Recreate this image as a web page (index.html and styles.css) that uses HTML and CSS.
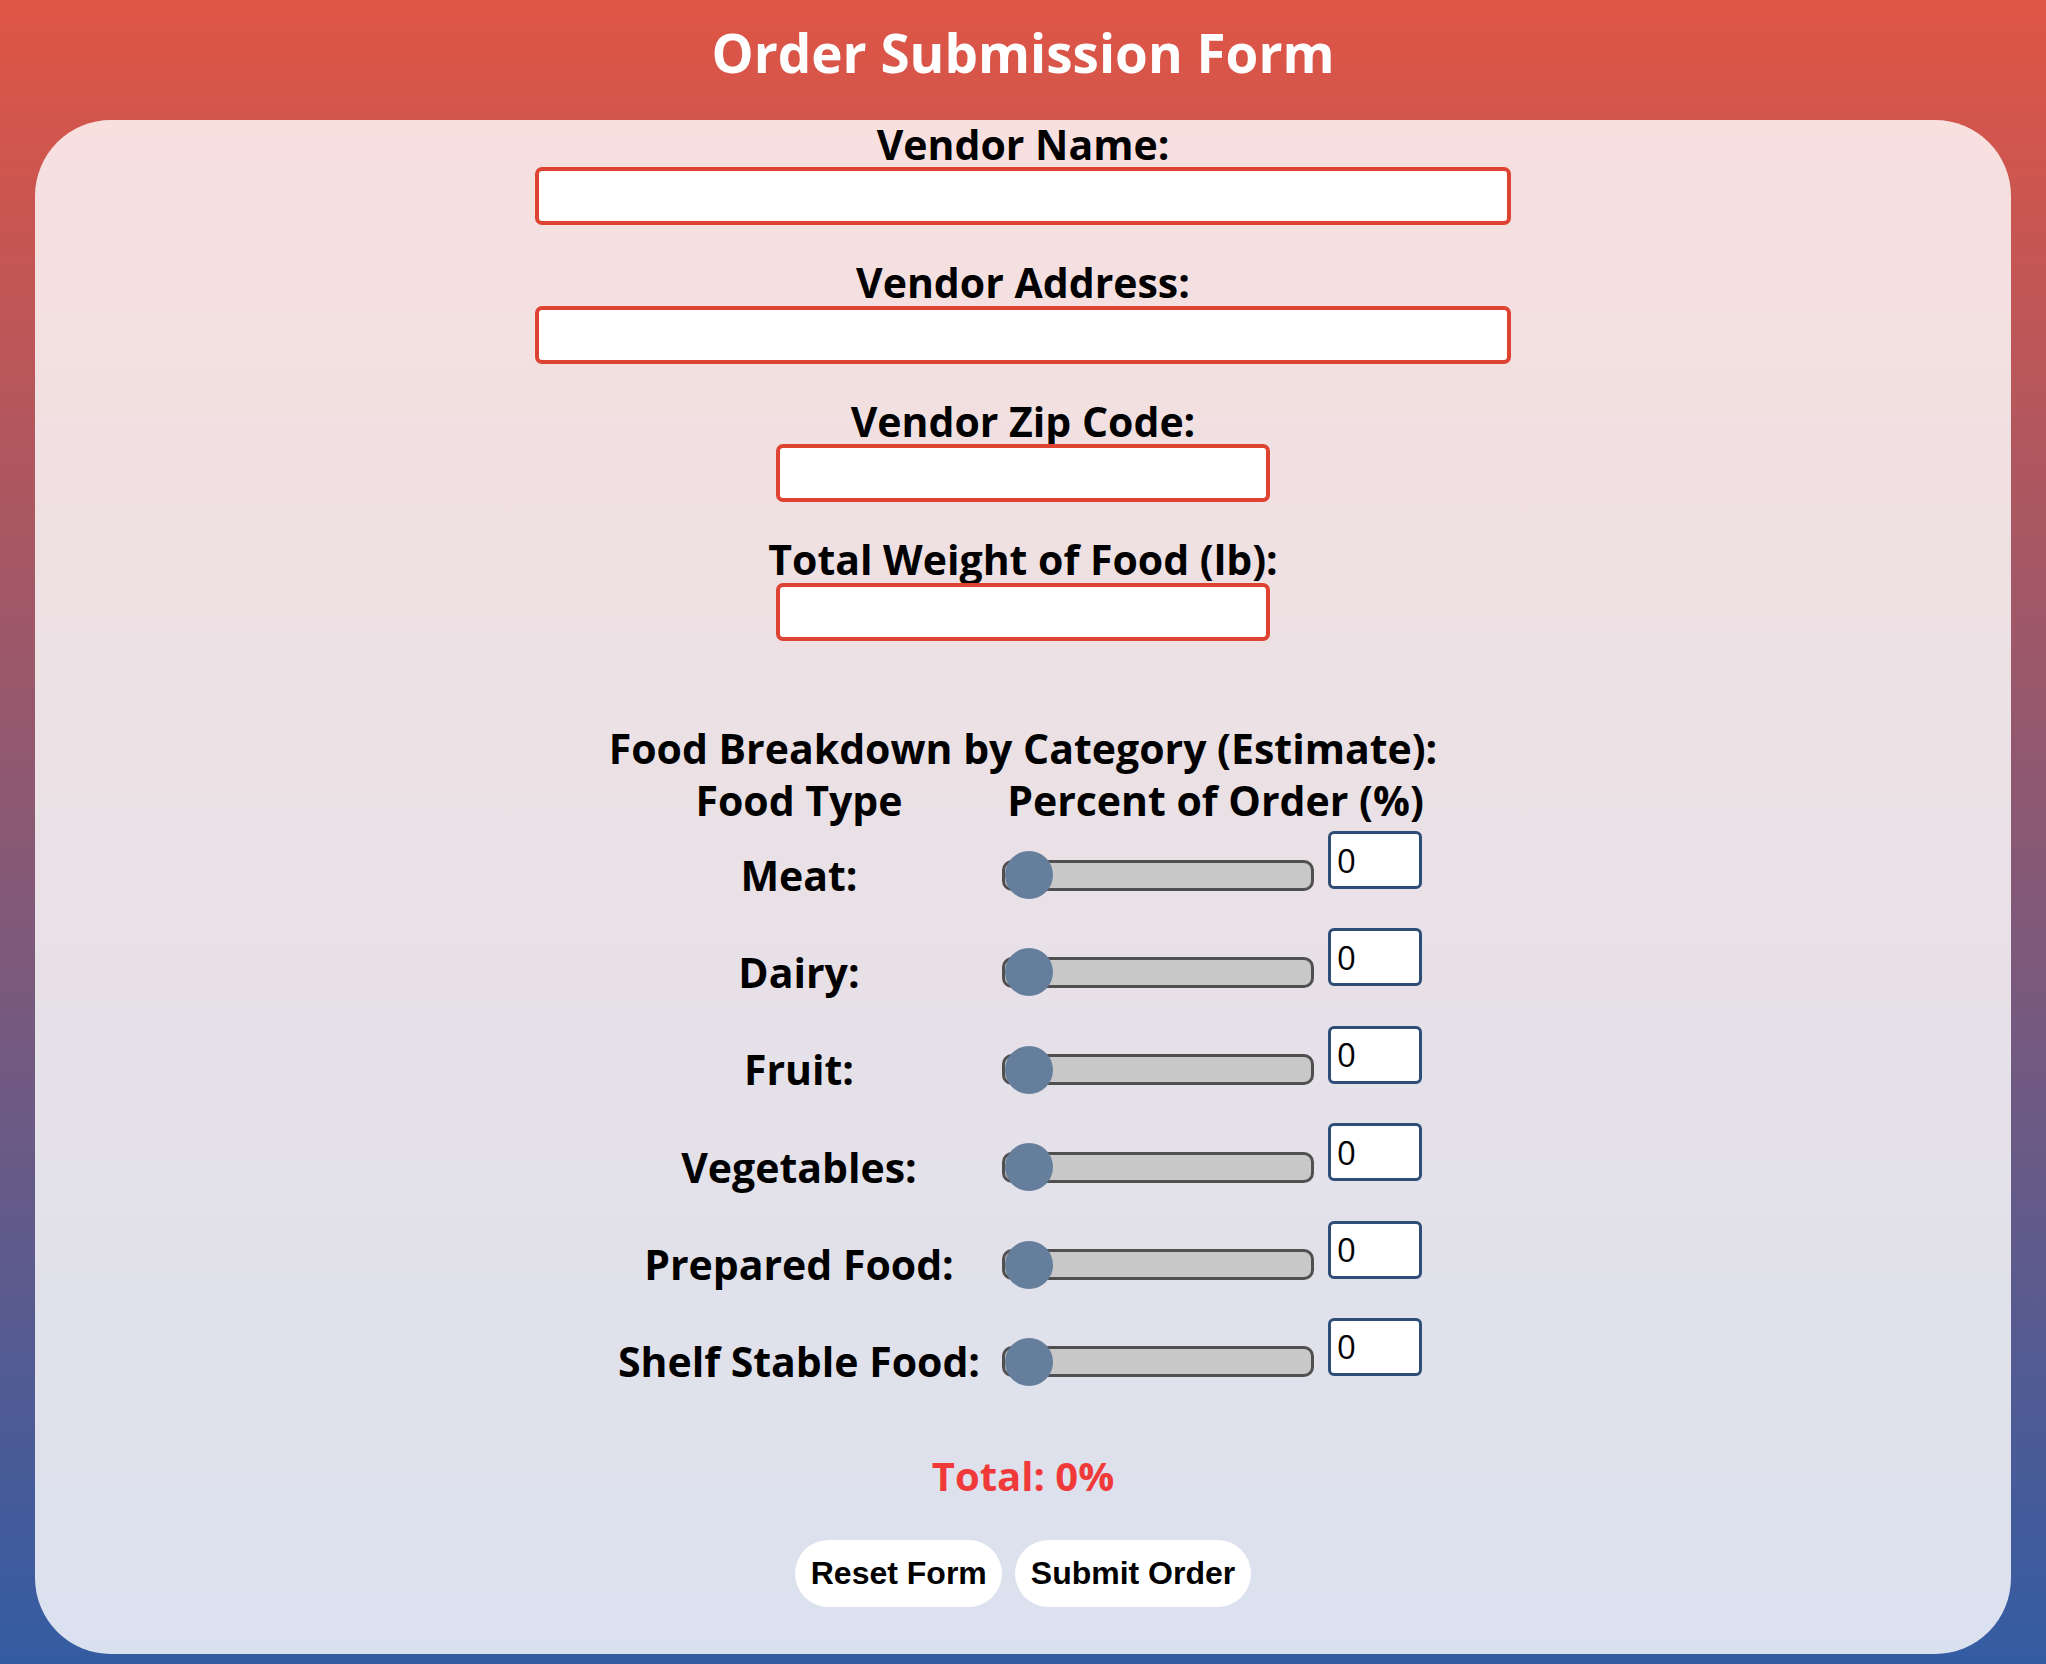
FILE: index.html
```html
<!DOCTYPE html>
<html lang="en">
<head>
<meta charset="utf-8">
<title>Order Submission Form</title>
<link rel="stylesheet" href="styles.css">
</head>
<body>
<header class="top">
  <h1 class="title">Order Submission Form</h1>
</header>
<main class="card">
  <form class="form">
    <div class="field">
      <label class="label" for="vname">Vendor Name:</label>
      <input id="vname" class="text wide" type="text">
    </div>
    <div class="field">
      <label class="label" for="vaddr">Vendor Address:</label>
      <input id="vaddr" class="text wide" type="text">
    </div>
    <div class="field">
      <label class="label" for="vzip">Vendor Zip Code:</label>
      <input id="vzip" class="text narrow" type="text">
    </div>
    <div class="field field-last">
      <label class="label" for="vweight">Total Weight of Food (lb):</label>
      <input id="vweight" class="text narrow" type="text">
    </div>

    <section class="breakdown">
      <div class="section-title">Food Breakdown by Category (Estimate):</div>
      <div class="row head">
        <div class="cell-label">Food Type</div>
        <div class="cell-head">Percent of Order (%)</div>
      </div>
      <div class="items">
        <div class="row">
          <label class="cell-label item-label" for="meat">Meat:</label>
          <div class="control">
            <input id="meat" class="slider" type="range" min="0" max="100" value="0">
            <input class="num" type="number" min="0" max="100" value="0">
          </div>
        </div>
        <div class="row">
          <label class="cell-label item-label" for="dairy">Dairy:</label>
          <div class="control">
            <input id="dairy" class="slider" type="range" min="0" max="100" value="0">
            <input class="num" type="number" min="0" max="100" value="0">
          </div>
        </div>
        <div class="row">
          <label class="cell-label item-label" for="fruit">Fruit:</label>
          <div class="control">
            <input id="fruit" class="slider" type="range" min="0" max="100" value="0">
            <input class="num" type="number" min="0" max="100" value="0">
          </div>
        </div>
        <div class="row">
          <label class="cell-label item-label" for="veg">Vegetables:</label>
          <div class="control">
            <input id="veg" class="slider" type="range" min="0" max="100" value="0">
            <input class="num" type="number" min="0" max="100" value="0">
          </div>
        </div>
        <div class="row">
          <label class="cell-label item-label" for="prep">Prepared Food:</label>
          <div class="control">
            <input id="prep" class="slider" type="range" min="0" max="100" value="0">
            <input class="num" type="number" min="0" max="100" value="0">
          </div>
        </div>
        <div class="row">
          <label class="cell-label item-label" for="shelf">Shelf Stable Food:</label>
          <div class="control">
            <input id="shelf" class="slider" type="range" min="0" max="100" value="0">
            <input class="num" type="number" min="0" max="100" value="0">
          </div>
        </div>
      </div>
    </section>

    <div class="total">Total: 0%</div>

    <div class="actions">
      <button type="reset" class="btn">Reset Form</button>
      <button type="submit" class="btn">Submit Order</button>
    </div>
  </form>
</main>
</body>
</html>
```

FILE: styles.css
```css
html {
  height: 100%;
}

body {
  margin: 0;
  min-height: 100%;
  background: linear-gradient(to bottom, #df5545 0%, #345ca3 100%);
  font-family: "Open Sans", "DejaVu Sans", sans-serif;
  color: #000;
}

.top {
  box-sizing: border-box;
  height: 120px;
  padding-top: 23px;
}

.title {
  margin: 0;
  font-size: 53px;
  line-height: 60px;
  font-weight: 700;
  color: #fff;
  text-align: center;
}

.card {
  margin: 0 35px;
  padding: 3.5px 0 47px;
  border-radius: 76px;
  background: rgba(255, 255, 255, 0.82);
}

.form {
  display: flex;
  flex-direction: column;
  align-items: center;
}

.field {
  display: flex;
  flex-direction: column;
  align-items: center;
  margin-bottom: 37px;
}

.field-last {
  margin-bottom: 0;
}

.label {
  font-size: 41px;
  font-weight: 700;
  line-height: 40px;
  margin-bottom: 3.5px;
}

.text {
  box-sizing: border-box;
  height: 58px;
  margin: 0;
  border: 4px solid #dd4330;
  border-radius: 7px;
  background: #fff;
  font-family: "Open Sans", sans-serif;
  font-size: 30px;
  padding: 0 8px;
  outline: none;
}

.wide {
  width: 976px;
}

.narrow {
  width: 494px;
}

.breakdown {
  margin-top: 87px;
  display: flex;
  flex-direction: column;
  align-items: center;
  font-size: 41px;
  font-weight: 700;
  line-height: 40px;
}

.section-title {
  margin-bottom: 12px;
  text-align: center;
}

.row {
  display: grid;
  grid-template-columns: 364px 427px;
  column-gap: 21px;
  justify-content: center;
}

.head {
  margin-bottom: 11.5px;
}

.cell-label {
  text-align: center;
  white-space: nowrap;
}

.cell-head {
  text-align: center;
  white-space: nowrap;
}

.items {
  display: flex;
  flex-direction: column;
  gap: 29.4px;
}

.item-label {
  padding-top: 23.5px;
}

.control {
  display: flex;
  align-items: flex-start;
  height: 68px;
}

.slider {
  -webkit-appearance: none;
  appearance: none;
  width: 312px;
  height: 48px;
  margin: 20px 0 0;
  padding: 0;
  background: transparent;
}

.slider::-webkit-slider-runnable-track {
  box-sizing: border-box;
  height: 31px;
  background: #c8c8c9;
  border: 3px solid #505050;
  border-radius: 10px;
}

.slider::-webkit-slider-thumb {
  -webkit-appearance: none;
  appearance: none;
  width: 48px;
  height: 48px;
  margin-top: -11.5px;
  border: none;
  border-radius: 50%;
  background: #647e9b;
}

.num {
  box-sizing: border-box;
  width: 94px;
  height: 58px;
  margin: 0 0 0 14px;
  padding: 0 0 0 6px;
  border: 3px solid #2e4e78;
  border-radius: 6px;
  background: #fff;
  font-family: "Open Sans", sans-serif;
  font-size: 33px;
  font-weight: 400;
  color: #000;
  -moz-appearance: textfield;
  appearance: textfield;
  outline: none;
}

.num::-webkit-inner-spin-button,
.num::-webkit-outer-spin-button {
  -webkit-appearance: none;
  margin: 0;
}

.total {
  margin-top: 70.5px;
  font-size: 40px;
  font-weight: 700;
  line-height: 40px;
  color: #f03a3a;
  text-align: center;
}

.actions {
  margin-top: 43.5px;
  display: flex;
  justify-content: center;
  gap: 13px;
}

.btn {
  height: 67px;
  padding: 0 15.5px;
  border: none;
  border-radius: 34px;
  background: #fff;
  font-family: "Liberation Sans", Arial, sans-serif;
  font-size: 32px;
  font-weight: 700;
  color: #000;
}
```
